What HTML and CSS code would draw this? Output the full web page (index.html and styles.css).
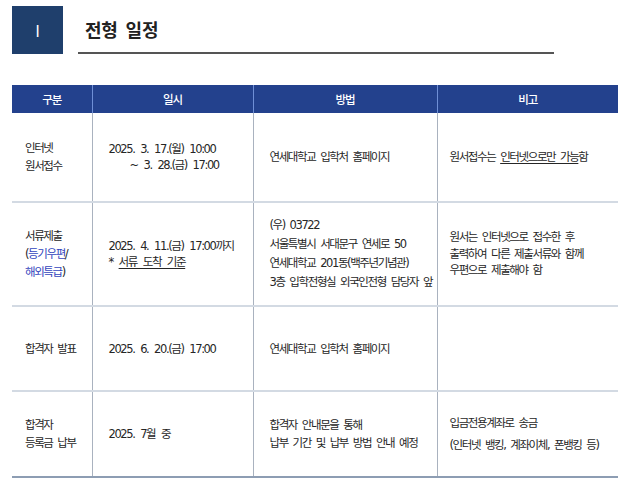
FILE: index.html
```html
<!DOCTYPE html>
<html lang="ko">
<head>
<meta charset="utf-8">
<title>전형 일정</title>
<link rel="stylesheet" href="styles.css">
</head>
<body>
<div class="page">
  <div class="heading">
    <div class="num-box">I</div>
    <div class="title-wrap"><h1 class="title">전형 일정</h1></div>
  </div>
  <table class="schedule">
    <colgroup>
      <col class="c1"><col class="c2"><col class="c3"><col class="c4">
    </colgroup>
    <thead>
      <tr class="head-row">
        <th>구분</th><th>일시</th><th>방법</th><th>비고</th>
      </tr>
    </thead>
    <tbody>
      <tr class="r1">
        <td class="cat">인터넷<br>원서접수</td>
        <td class="date lh-date"><div>2025. 3. 17.(월) 10:00</div><div class="indent">~ 3. 28.(금) 17:00</div></td>
        <td class="method">연세대학교 입학처 홈페이지</td>
        <td class="note">원서접수는 <span class="ul">인터넷으로만 가능</span>함</td>
      </tr>
      <tr class="r2">
        <td class="cat">서류제출<br>(<span class="blue">등기우편</span>/<br><span class="blue">해외특급</span>)</td>
        <td class="date lh-date"><div>2025. 4. 11.(금) 17:00까지</div><div>* <span class="ul">서류 도착 기준</span></div></td>
        <td class="method lh-addr">(우) 03722<br>서울특별시 서대문구 연세로 50<br>연세대학교 201동(백주년기념관)<br>3층 입학전형실 외국인전형 담당자 앞</td>
        <td class="note lh-tight">원서는 인터넷으로 접수한 후<br>출력하여 다른 제출서류와 함께<br>우편으로 제출해야 함</td>
      </tr>
      <tr class="r3">
        <td class="cat">합격자 발표</td>
        <td class="date">2025. 6. 20.(금) 17:00</td>
        <td class="method">연세대학교 입학처 홈페이지</td>
        <td class="note"></td>
      </tr>
      <tr class="r4">
        <td class="cat">합격자<br>등록금 납부</td>
        <td class="date">2025. 7월 중</td>
        <td class="method">합격자 안내문을 통해<br>납부 기간 및 납부 방법 안내 예정</td>
        <td class="note lh-wide">입금전용계좌로 송금<br>(인터넷 뱅킹, 계좌이체, 폰뱅킹 등)</td>
      </tr>
    </tbody>
  </table>
</div>
</body>
</html>
```

FILE: styles.css
```css
html, body {
  margin: 0;
  padding: 0;
  background: #ffffff;
}

.page {
  padding: 6px 0 0 12px;
  font-family: "DejaVu Sans", "Noto Sans CJK KR", sans-serif;
  color: #262626;
}

.heading {
  display: flex;
  align-items: flex-start;
}

.num-box {
  width: 51px;
  height: 48px;
  background: #1f3f6c;
  color: #ffffff;
  display: flex;
  align-items: center;
  justify-content: center;
  font-family: "Noto Sans CJK KR", sans-serif;
  font-size: 16px;
  font-weight: 400;
}

.title-wrap {
  margin-left: 15px;
  width: 476px;
  height: 46px;
  border-bottom: 2px solid #555555;
  display: flex;
  align-items: center;
}

.title {
  margin: 0 0 0 7px;
  font-family: "Noto Sans CJK KR", sans-serif;
  font-size: 18px;
  font-weight: 700;
  color: #222222;
  letter-spacing: -0.2px;
  word-spacing: 3px;
}

.schedule {
  margin-top: 31px;
  width: 606px;
  border-collapse: collapse;
  table-layout: fixed;
  font-size: 11.5px;
  letter-spacing: -1.4px;
  word-spacing: 2.5px;
}

.c1 { width: 80px; }
.c2 { width: 161px; }
.c3 { width: 184px; }
.c4 { width: 181px; }

.head-row {
  height: 28px;
  background: #23418d;
}

.head-row th {
  color: #ffffff;
  font-family: "Noto Sans CJK KR", sans-serif;
  font-weight: 500;
  font-size: 11.5px;
  letter-spacing: -1px;
  padding: 0;
  border-left: 1px solid #6f8fd6;
}

.head-row th:first-child {
  border-left: none;
}

.schedule td {
  vertical-align: middle;
  line-height: 18px;
  padding: 0;
  border-left: 1px solid #a9b2bf;
  border-bottom: 2px solid #d3dae3;
}

.schedule td:first-child {
  border-left: none;
}

.r1 { height: 89px; }
.r2 { height: 104px; }
.r3 { height: 85px; }
.r4 { height: 86px; }

.r4 td {
  border-bottom: 2px solid #8d9db3;
}

.cat { padding-left: 13px !important; }
.date { padding-left: 16px !important; word-spacing: 3.5px; }
.method { padding-left: 16px !important; }
.note { padding-left: 12px !important; }

.lh-date { line-height: 16.5px !important; }
.lh-addr { line-height: 19px !important; }
.lh-tight { line-height: 16.5px !important; }
.lh-wide { line-height: 22px !important; }

.indent { padding-left: 21px; }

.blue { color: #3346bd; }

.ul {
  text-decoration: underline;
  text-underline-offset: 2px;
}
```
